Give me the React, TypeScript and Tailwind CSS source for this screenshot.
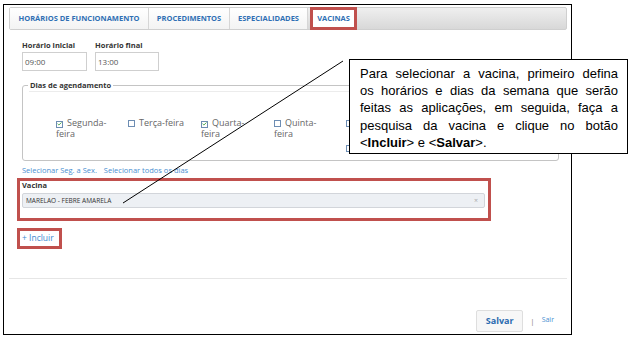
import { Check } from 'lucide-react';

const ui = { fontFamily: '"Open Sans", "Noto Sans", sans-serif' };
const arial = { fontFamily: '"Liberation Sans", Arial, sans-serif' };

const tabs = [
  { label: 'HORÁRIOS DE FUNCIONAMENTO', w: 'w-[139px]' },
  { label: 'PROCEDIMENTOS', w: 'w-[81px]' },
  { label: 'ESPECIALIDADES', w: 'w-[78px]' },
];

const Box = ({ checked }: { checked?: boolean }) => (
  <span className="inline-flex items-center justify-center w-[7px] h-[7px] border border-[#6d8db3] bg-white align-[-1px] mr-[4px]">
    {checked && <Check className="w-[6px] h-[6px] text-[#2e9b2e]" strokeWidth={4} />}
  </span>
);

const Day = ({ checked, children }: { checked?: boolean; children?: React.ReactNode }) => (
  <div className="text-[9px] leading-[11px] text-[#666]">
    <Box checked={checked} />
    {children}
  </div>
);

const App = () => {
  return (
    <div className="relative w-[631px] h-[339px] bg-white overflow-hidden" style={ui}>
      <div className="ml-[3px] mt-[4px] w-[569px] h-[331px] border-[1.5px] border-black pl-[5px] pr-[2px] pt-[2px]">
        {/* tabs */}
        <div className="w-[558px] h-[23px] flex items-stretch bg-gradient-to-b from-[#efefef] to-[#d8d8d8] border border-[#cfcfcf] rounded-[2px]">
          {tabs.map((t) => (
            <div
              key={t.label}
              className={`${t.w} flex items-center justify-center bg-gradient-to-b from-white to-[#f3f3f3] border-r border-[#d6d6d6] text-[7.5px] font-bold text-[#2f6fb4]`}
            >
              {t.label}
            </div>
          ))}
          <div className="ml-[2px] w-[47px] -my-px flex items-center justify-center bg-white border-[3px] border-[#c0504d] text-[7.5px] font-bold text-[#2f6fb4]">
            VACINAS
          </div>
        </div>

        <div className="pl-[8px]">
          {/* horários */}
          <div className="ml-[5px] mt-[10px] flex gap-[8px]">
            <div>
              <div className="text-[7.5px] leading-[10px] font-bold text-[#333]">Horário inicial</div>
              <div className="mt-[2px] w-[65px] h-[19px] border border-[#cfcfcf] flex items-center pl-[2px] text-[8px] text-[#555]">09:00</div>
            </div>
            <div>
              <div className="text-[7.5px] leading-[10px] font-bold text-[#333]">Horário final</div>
              <div className="mt-[2px] w-[64px] h-[19px] border border-[#cfcfcf] flex items-center pl-[2px] text-[8px] text-[#555]">13:00</div>
            </div>
          </div>

          {/* dias */}
          <fieldset className="ml-[5px] mt-[9px] w-[537px] border border-[#c4c4c4] rounded-[3px] pb-[7px]">
            <legend className="ml-[5px] px-[2px] text-[7.5px] leading-[10px] font-bold text-[#333]">Dias de agendamento</legend>
            <div className="mt-[1px] ml-[6px] mr-[4px] h-px bg-[#ececec]" />
            <div className="mt-[25px] pl-[33px] grid grid-cols-[72px_73px_73px_72px_73px]">
              <Day checked>Segunda-<br />feira</Day>
              <Day>Terça-feira</Day>
              <Day checked>Quarta-<br />feira</Day>
              <Day>Quinta-<br />feira</Day>
              {/* remaining days sit under the callout */}
              <div>
                <Day />
                <div className="mt-[14px]">
                  <Day />
                </div>
              </div>
            </div>
          </fieldset>

          <div className="ml-[5px] mt-[4px] flex gap-[7px] text-[7.5px] leading-[10px] text-[#4a8fd1]">
            <span>Selecionar Seg. a Sex.</span>
            <span>Selecionar todos os dias</span>
          </div>

          {/* vacina */}
          <div className="mt-[3px] w-[474px] h-[43px] border-[3px] border-[#c0504d] pl-[2px]">
            <div className="text-[7.5px] leading-[9px] font-bold text-[#333]">Vacina</div>
            <div className="mt-[3px] w-[463px] h-[15px] bg-[#edf0f4] border border-[#d2d5da] rounded-[2px] flex items-center justify-between pl-[3px] pr-[6px]">
              <span className="text-[6.5px] text-[#333]">MARELAO - FEBRE AMARELA</span>
              <span className="text-[7px] leading-none text-[#aaa]">×</span>
            </div>
          </div>

          <div className="mt-[7px] w-[45px] h-[21px] border-[3px] border-[#c0504d] pl-[2px] flex items-center text-[8.5px] text-[#3e8ad0]">
            + Incluir
          </div>
        </div>

        <div className="mt-[29px] h-px w-[558px] bg-[#e6e6e6]" />

        <div className="mt-[31px] w-[558px] flex items-center justify-end pr-[13px]">
          <div className="w-[47px] h-[22px] bg-[#f7f7f7] border border-[#dedede] rounded-[2px] flex items-center justify-center text-[9px] font-bold text-[#2a6bb0]">
            Salvar
          </div>
          <span className="ml-[7px] text-[8px] text-[#888]">|</span>
          <span className="ml-[7px] text-[7px] text-[#4a8fd1] -mt-[2px]">Sair</span>
        </div>
      </div>

      {/* annotation */}
      <svg className="absolute inset-0 pointer-events-none" width="631" height="339">
        <line x1="343" y1="61" x2="123" y2="203" stroke="#000" strokeWidth="1" />
      </svg>
      <div
        className="absolute left-[349px] top-[59px] w-[279px] h-[95px] bg-white border border-black pl-[10px] pr-[9px] pt-[5px] text-[13px] leading-[17.2px] text-black"
        style={arial}
      >
        <span className="block text-justify [text-align-last:justify]">Para selecionar a vacina, primeiro defina</span>
        <span className="block text-justify [text-align-last:justify]">os horários e dias da semana que serão</span>
        <span className="block text-justify [text-align-last:justify]">feitas as aplicações, em seguida, faça a</span>
        <span className="block text-justify [text-align-last:justify]">pesquisa da vacina e clique no botão</span>
        <span className="block">
          &lt;<b>Incluir</b>&gt; e &lt;<b>Salvar</b>&gt;.
        </span>
      </div>
    </div>
  );
};

export default App;
